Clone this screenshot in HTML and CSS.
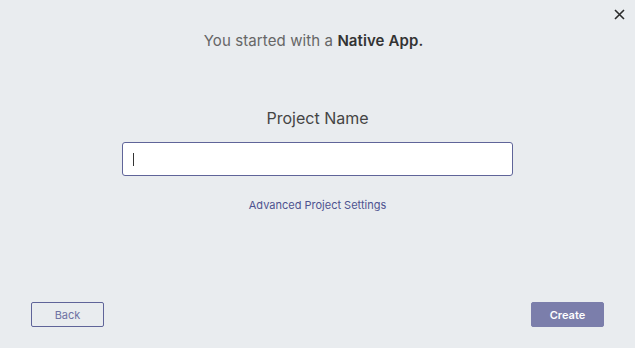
FILE: index.html
```html
<!DOCTYPE html>
<html lang="en">

<head>
    <meta charset="UTF-8">
    <meta name="viewport" content="width=device-width, initial-scale=1.0">
    <title>new project</title>
    <link rel="stylesheet" href="styles.css">
</head>

<body>
    <div class="dialog">
        <button class="close" aria-label="close">
            <svg width="11" height="11" viewBox="0 0 11 11">
                <path d="M1 1L10 10M10 1L1 10" stroke="#2b2b2b" stroke-width="1.6" fill="none"/>
            </svg>
        </button>
        <h1 class="intro">You started with a <b>Native App.</b></h1>
        <div class="form">
            <label class="label" for="projectName">Project Name</label>
            <div class="field" id="projectName"><span class="caret"></span></div>
            <a class="advanced" href="#">Advanced Project Settings</a>
        </div>
        <div class="footer">
            <button class="btn btn-back">Back</button>
            <button class="btn btn-create">Create</button>
        </div>
    </div>
</body>

</html>
```

FILE: styles.css
```css
html,
body {
    margin: 0;
    background: #e9ecef;
}

.dialog {
    position: relative;
    height: 348px;
    box-sizing: border-box;
    display: flex;
    flex-direction: column;
    font-family: Inter, "Noto Sans", sans-serif;
}

.close {
    position: absolute;
    top: 9px;
    right: 10px;
    border: none;
    background: none;
    padding: 0;
    width: 11px;
    height: 11px;
    display: flex;
}

.intro {
    margin: 31px 0 0;
    padding-right: 8px;
    text-align: center;
    font-size: 15px;
    font-weight: 400;
    color: #666;
    letter-spacing: 0.1px;
}

.intro b {
    font-weight: 600;
    color: #333;
}

.form {
    display: flex;
    flex-direction: column;
    align-items: center;
    margin-top: 58px;
}

.label {
    font-size: 16px;
    color: #444;
}

.field {
    margin-top: 14px;
    width: 391px;
    height: 34px;
    box-sizing: border-box;
    background: #fff;
    border: 1px solid #5f6499;
    border-radius: 3px;
    display: flex;
    align-items: center;
    padding-left: 10px;
}

.caret {
    width: 1px;
    height: 13px;
    background: #333;
}

.advanced {
    margin-top: 22px;
    font-size: 11px;
    color: #4e5390;
    text-decoration: none;
}

.footer {
    margin-top: auto;
    display: flex;
    justify-content: space-between;
    padding: 0 31px 21px;
}

.btn {
    width: 73px;
    height: 25px;
    box-sizing: border-box;
    border-radius: 2px;
    font-family: Inter, "Noto Sans", sans-serif;
    font-size: 11px;
    padding: 0;
}

.btn-back {
    background: transparent;
    border: 1px solid #5f6499;
    color: #6e72a3;
}

.btn-create {
    background: #7b7eab;
    border: 1px solid #7b7eab;
    color: #fff;
    font-weight: 600;
}
```
